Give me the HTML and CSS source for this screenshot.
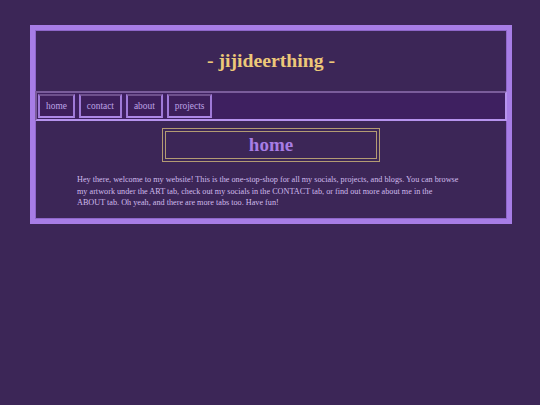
FILE: index.html
```html
<!DOCTYPE html>
<html>
<head>
<meta charset="utf-8">
<link rel="stylesheet" href="styles.css">
</head>
<body>
<div class="frame">
  <header class="header">
    <h1 class="title">- jijideerthing -</h1>
  </header>
  <nav class="nav">
    <a class="tab">home</a>
    <a class="tab">contact</a>
    <a class="tab">about</a>
    <a class="tab">projects</a>
  </nav>
  <main class="content">
    <div class="heading-box"><h2 class="heading">home</h2></div>
    <p class="text">Hey there, welcome to my website! This is the one-stop-shop for all my socials, projects, and blogs. You can browse my artwork under the ART tab, check out my socials in the CONTACT tab, or find out more about me in the ABOUT tab. Oh yeah, and there are more tabs too. Have fun!</p>
  </main>
</div>
</body>
</html>
```

FILE: styles.css
```css
html, body {
  margin: 0;
  padding: 0;
  background: #3c2657;
  font-family: "Liberation Serif", "DejaVu Serif", serif;
}
body {
  padding: 25px 29px 0 30px;
}
.frame {
  width: 472px;
  border: 5px solid #a77de6;
  box-shadow: inset 0 0 0 1px #8e66c9;
  background: #3c2657;
}
.header {
  height: 61px;
  display: flex;
  align-items: center;
  justify-content: center;
}
.title {
  margin: 0;
  font-size: 19.7px;
  font-weight: bold;
  color: #ecc879;
}
.nav {
  height: 24px;
  display: flex;
  gap: 4px;
  padding: 1px 1px;
  background: #3e2060;
  border-style: solid;
  border-width: 2px;
  border-color: #7a5c9b #b693ee #b693ee #7a5c9b;
}
.tab {
  display: flex;
  align-items: center;
  padding: 0 6px;
  background: #3d1f5b;
  color: #bea3e6;
  font-size: 9.4px;
  border-style: solid;
  border-width: 2px;
  border-color: #6e508c #9f7ad8 #ad88e6 #9f7ad8;
}
.content {
  padding: 7px 46px 10px 42px;
  display: flex;
  flex-direction: column;
  align-items: center;
}
.heading-box {
  width: 210px;
  height: 26px;
  margin-left: 4px;
  border: 4px double #b39b73;
  display: flex;
  align-items: center;
  justify-content: center;
}
.heading {
  margin: 0;
  font-size: 19px;
  font-weight: bold;
  color: #a77de4;
}
.text {
  margin: 12px 0 0;
  font-size: 8.2px;
  line-height: 11.5px;
  color: #cfbbec;
}
```
